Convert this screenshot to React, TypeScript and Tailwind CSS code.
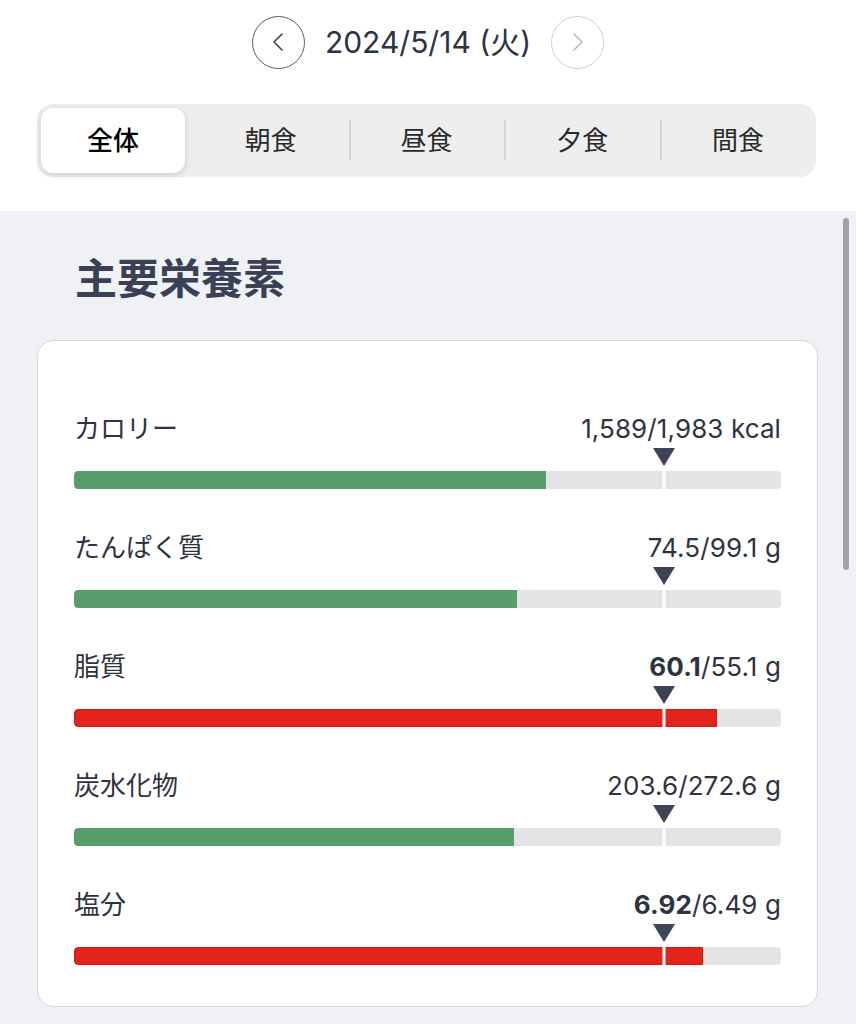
import React from 'react';

const FONT = 'Inter, "Noto Sans CJK JP", sans-serif';

type Nutrient = {
  label: string;
  value: string;
  target: string;
  unit: string;
  ratio: number;
  over: boolean;
};

const TARGET_POS = 0.834;

const nutrients: Nutrient[] = [
  { label: 'カロリー', value: '1,589', target: '1,983', unit: 'kcal', ratio: 1589 / 1983, over: false },
  { label: 'たんぱく質', value: '74.5', target: '99.1', unit: 'g', ratio: 74.5 / 99.1, over: false },
  { label: '脂質', value: '60.1', target: '55.1', unit: 'g', ratio: 60.1 / 55.1, over: true },
  { label: '炭水化物', value: '203.6', target: '272.6', unit: 'g', ratio: 203.6 / 272.6, over: false },
  { label: '塩分', value: '6.92', target: '6.49', unit: 'g', ratio: 6.92 / 6.49, over: true },
];

const tabs = ['全体', '朝食', '昼食', '夕食', '間食'];

function Chevron({ dir, color }: { dir: 'left' | 'right'; color: string }) {
  return (
    <svg width="12" height="20" viewBox="0 0 12 20" fill="none">
      <path
        d={dir === 'left' ? 'M10 2 L2 10 L10 18' : 'M2 2 L10 10 L2 18'}
        stroke={color}
        strokeWidth="1.6"
        strokeLinecap="round"
        strokeLinejoin="round"
      />
    </svg>
  );
}

function Row({ n, first }: { n: Nutrient; first: boolean }) {
  const fill = Math.min(n.ratio * TARGET_POS, 1);
  return (
    <div className={first ? '' : 'mt-[43px]'}>
      <div className="flex h-[30px] items-center justify-between text-[#2f3340]">
        <span className="text-[26px]">{n.label}</span>
        <span className="text-[26px] tracking-[0.1px]">
          <span className={n.over ? 'font-bold' : ''}>{n.value}</span>/{n.target} {n.unit}
        </span>
      </div>
      <div className="relative mt-[5px] h-[18px]">
        <svg
          className="absolute top-0 -translate-x-1/2"
          style={{ left: `${TARGET_POS * 100}%` }}
          width="22"
          height="18"
          viewBox="0 0 22 18"
        >
          <path d="M0 0 H22 L11 18 Z" fill="#3d4455" />
        </svg>
      </div>
      <div className="relative mt-[5px] h-[18px] overflow-hidden rounded-[4px] bg-[#e4e4e6]">
        <div
          className={
            n.over
              ? 'h-full rounded-l-[4px] border border-[#c81b16] bg-[#e3231c]'
              : 'h-full rounded-l-[4px] bg-[#5a9d6c]'
          }
          style={{ width: `${fill * 100}%` }}
        />
        <div
          className="absolute top-0 h-full w-[3px] -translate-x-1/2 bg-white"
          style={{ left: `${TARGET_POS * 100}%` }}
        />
      </div>
    </div>
  );
}

export default function App() {
  return (
    <div className="relative min-h-[1024px] w-[856px] bg-white" style={{ fontFamily: FONT }}>
      {/* date nav */}
      <div className="flex h-[84px] items-center justify-center gap-5">
        <button className="flex h-[53px] w-[53px] items-center justify-center rounded-full border border-[#5a5d66]">
          <Chevron dir="left" color="#3a3d46" />
        </button>
        <span className="text-[30px] text-[#2d3346]">2024/5/14 (火)</span>
        <button className="flex h-[53px] w-[53px] items-center justify-center rounded-full border border-[#cfd0d4]">
          <Chevron dir="right" color="#b9bbc0" />
        </button>
      </div>

      {/* meal tabs */}
      <div className="mx-[37px] mt-[20px] grid h-[73px] w-[779px] grid-cols-5 rounded-[16px] bg-[#eeeeee] py-[4px]">
        {tabs.map((t, i) => (
          <div key={t} className="relative flex items-center justify-center">
            {i === 0 ? (
              <div className="mr-auto ml-[4px] flex h-full w-[144px] items-center justify-center rounded-[12px] bg-white text-[26px] font-medium text-black shadow-[0_2px_6px_rgba(0,0,0,0.15)]">
                {t}
              </div>
            ) : (
              <span className="text-[26px] text-[#2a2a2a]">{t}</span>
            )}
            {i >= 2 && (
              <div className="absolute left-0 top-[12px] h-[40px] w-[2px] bg-[#d6d6d6]" />
            )}
          </div>
        ))}
      </div>

      {/* nutrients section */}
      <div className="relative mt-[34px] bg-[#f0f1f4] pb-[18px] pt-[42px]">
        <div className="absolute right-[7px] top-[7px] h-[352px] w-[6px] rounded-full bg-[#a3a3a6]" />
        <h2 className="ml-[75px] text-[42px] font-bold leading-[52px] text-[#3a4056]">主要栄養素</h2>
        <div className="mx-[37px] mt-[35px] w-[781px] rounded-[16px] border border-[#d6d7dc] bg-white px-[36px] pb-[41px] pt-[72px]">
          {nutrients.map((n, i) => (
            <Row key={n.label} n={n} first={i === 0} />
          ))}
        </div>
      </div>
    </div>
  );
}
